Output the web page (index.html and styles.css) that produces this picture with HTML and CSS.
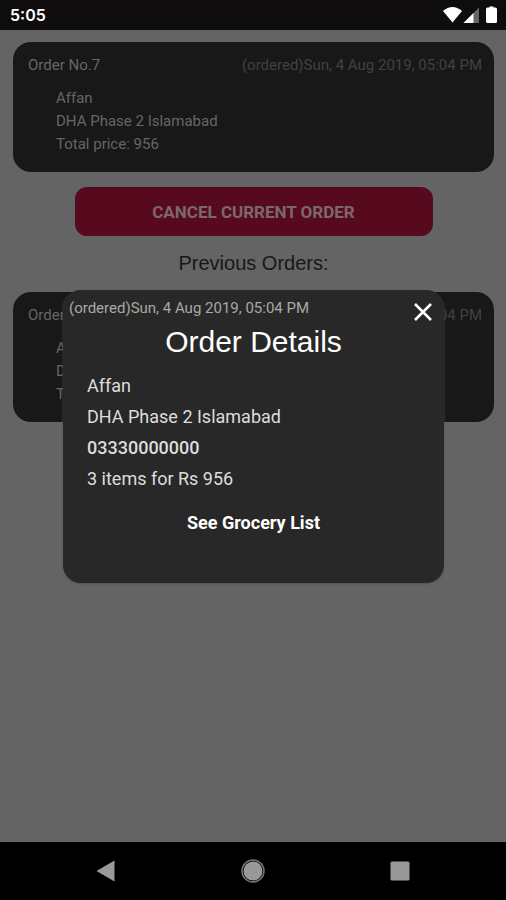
FILE: index.html
```html
<!DOCTYPE html>
<html lang="en">
<head>
<meta charset="utf-8">
<meta name="viewport" content="width=device-width, initial-scale=1">
<title>Orders</title>
<link rel="stylesheet" href="styles.css">
</head>
<body>
<header class="status">
  <time class="clock">5:05</time>
  <svg class="status-icons" width="56" height="20" viewBox="0 0 56 20" aria-hidden="true">
    <path fill="#fff" d="M1 6Q10.500-2 20 6L10.500 17.500Z"/>
    <path fill="#666" d="M37 2.500V18H21.500Z"/>
    <path fill="#fff" d="M31.500 8V18H21.500Z"/>
    <path fill="#fff" d="M47.500 2.500V1.500h4v1h2q1.500 0 1.500 1.500v12.500q0 1.500-1.500 1.500h-8q-1.500 0-1.500-1.500v-12.500q0-1.500 1.500-1.500z"/>
  </svg>
</header>
<div class="screen">
  <main class="orders">
    <article class="card">
      <div class="card-head"><h2 class="card-title">Order No.7</h2><time class="card-date">(ordered)Sun, 4 Aug 2019, 05:04 PM</time></div>
      <div class="card-body"><p>Affan</p><p>DHA Phase 2 Islamabad</p><p>Total price: 956</p></div>
    </article>
    <button class="cancel" type="button">CANCEL CURRENT ORDER</button>
    <h1 class="section-title">Previous Orders:</h1>
    <article class="card">
      <div class="card-head"><h2 class="card-title">Order No.7</h2><time class="card-date">(ordered)Sun, 4 Aug 2019, 05:04 PM</time></div>
      <div class="card-body"><p>Affan</p><p>DHA Phase 2 Islamabad</p><p>Total price: 956</p></div>
    </article>
  </main>
  <div class="overlay">
    <section class="modal" role="dialog" aria-modal="true" aria-labelledby="details-title">
      <div class="modal-top">
        <time class="modal-date">(ordered)Sun, 4 Aug 2019, 05:04 PM</time>
        <button class="close" type="button" aria-label="Close">
          <svg width="20" height="20" viewBox="0 0 20 20" aria-hidden="true"><path d="M2 2L18 18M18 2L2 18" stroke="#fff" stroke-width="2.600"/></svg>
        </button>
      </div>
      <h2 class="modal-title" id="details-title">Order Details</h2>
      <div class="modal-body">
        <p>Affan</p>
        <p>DHA Phase 2 Islamabad</p>
        <p class="phone">03330000000</p>
        <p>3 items for Rs 956</p>
      </div>
      <button class="grocery" type="button">See Grocery List</button>
    </section>
  </div>
</div>
<nav class="navbar" aria-label="System">
  <button class="nav-button" type="button" aria-label="Back"><svg width="24" height="24" viewBox="0 0 24 24"><path fill="#999" d="M20.500 1.500V22.500L2.500 12Z"/></svg></button>
  <button class="nav-button" type="button" aria-label="Home"><svg width="24" height="24" viewBox="0 0 24 24"><circle cx="12" cy="12" r="11" fill="none" stroke="#777" stroke-width="1.500"/><circle cx="12" cy="12" r="9.500" fill="#999"/></svg></button>
  <button class="nav-button" type="button" aria-label="Recents"><svg width="24" height="24" viewBox="0 0 24 24"><rect x="2.500" y="2.500" width="19" height="19" rx="1.500" fill="#999"/></svg></button>
</nav>
</body>
</html>
```
FILE: styles.css
```css
* {
  box-sizing: border-box;
}

body {
  margin: 0;
  min-height: 100vh;
  display: flex;
  flex-direction: column;
  background: #646464;
  font-family: Roboto, "Liberation Sans", sans-serif;
}

h1, h2, p {
  margin: 0;
  font-weight: 400;
}

button {
  border: 0;
  padding: 0;
  background: none;
  color: inherit;
  font-family: inherit;
}

svg {
  display: block;
}

.status {
  height: 30px;
  padding: 0 8px 0 10px;
  display: flex;
  align-items: center;
  justify-content: space-between;
  background: #0f0c0d;
  color: #fff;
}

.clock {
  font: 600 16px/24px Inter, sans-serif;
}

.screen {
  position: relative;
  flex: 1;
}

.orders {
  padding: 12px 12px 12px 13px;
  display: flex;
  flex-direction: column;
}

.card {
  height: 130px;
  padding: 12px 12px 12px 15px;
  border-radius: 18px;
  background: #181818;
  color: #666;
  font-size: 15px;
  line-height: 23px;
}

.card-head {
  display: flex;
  justify-content: space-between;
}

.card-title {
  font-size: 15px;
}

.card-date {
  color: #42413d;
}

.card-body {
  padding: 10px 0 0 28px;
}

.cancel {
  width: 358px;
  height: 49px;
  margin: 15px auto 14px;
  border-radius: 12px;
  background: #570a1e;
  color: #7c686c;
  font-size: 17px;
  font-weight: 700;
}

.section-title {
  margin-bottom: 16px;
  color: #181818;
  font: 400 20px/26px "Liberation Sans", sans-serif;
  text-align: center;
}

.overlay {
  position: absolute;
  inset: 0;
  padding-left: 1px;
  display: flex;
  align-items: center;
  justify-content: center;
}

.modal {
  width: 76%;
  max-width: 381px;
  padding: 6px 6px 49px;
  display: flex;
  flex-direction: column;
  border-radius: 18px;
  background: #282828;
  color: #ddd;
  box-shadow: 0 1px 2px #555;
}

.modal-top {
  display: flex;
  justify-content: space-between;
}

.modal-date {
  color: #aaa9a3;
  font-size: 15px;
  line-height: 24px;
}

.close {
  padding: 6px 5px 2px;
}

.modal-title {
  color: #fff;
  font: 400 30px/35px "Liberation Sans", sans-serif;
  text-align: center;
}

.modal-body {
  padding: 11px 18px 0;
  font-size: 18px;
  line-height: 31px;
}

.phone {
  font-weight: 500;
}

.grocery {
  margin-top: 18px;
  color: #fff;
  font-size: 18px;
  font-weight: 700;
  line-height: 22px;
}

.navbar {
  height: 58px;
  padding: 0 33px;
  display: flex;
  align-items: center;
  background: #000;
}

.nav-button {
  flex: 1;
  display: flex;
  justify-content: center;
}
```
